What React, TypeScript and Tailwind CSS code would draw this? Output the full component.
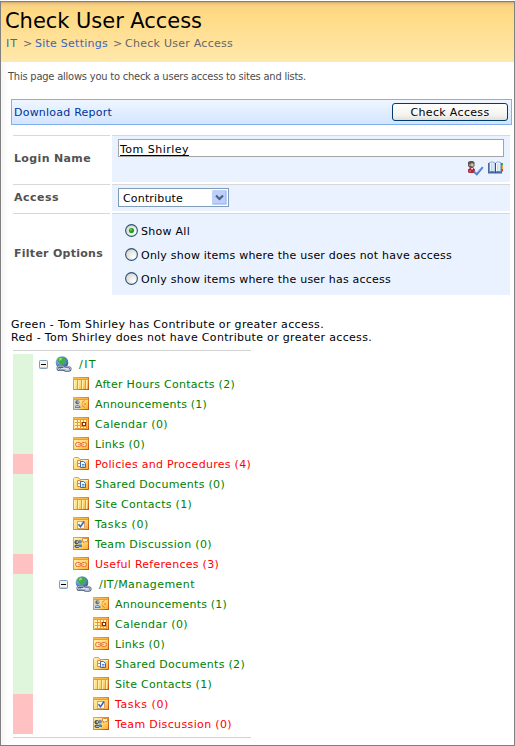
import React from "react";

type IconName = "columns" | "announce" | "calendar" | "links" | "docs" | "tasks" | "discussion";

interface Item {
  icon: IconName | "site";
  label: string;
  width: number;
  denied?: boolean;
  depth: number;
}

const items: Item[] = [
  { icon: "site", label: "/IT", width: 18, depth: 0 },
  { icon: "columns", label: "After Hours Contacts (2)", width: 140, depth: 0 },
  { icon: "announce", label: "Announcements (1)", width: 112, depth: 0 },
  { icon: "calendar", label: "Calendar (0)", width: 73, depth: 0 },
  { icon: "links", label: "Links (0)", width: 50, depth: 0 },
  { icon: "docs", label: "Policies and Procedures (4)", width: 156, denied: true, depth: 0 },
  { icon: "docs", label: "Shared Documents (0)", width: 130, depth: 0 },
  { icon: "columns", label: "Site Contacts (1)", width: 97, depth: 0 },
  { icon: "tasks", label: "Tasks (0)", width: 54, depth: 0 },
  { icon: "discussion", label: "Team Discussion (0)", width: 117, depth: 0 },
  { icon: "links", label: "Useful References (3)", width: 124, denied: true, depth: 0 },
  { icon: "site", label: "/IT/Management", width: 96, depth: 1 },
  { icon: "announce", label: "Announcements (1)", width: 112, depth: 1 },
  { icon: "calendar", label: "Calendar (0)", width: 73, depth: 1 },
  { icon: "links", label: "Links (0)", width: 50, depth: 1 },
  { icon: "docs", label: "Shared Documents (2)", width: 130, depth: 1 },
  { icon: "columns", label: "Site Contacts (1)", width: 97, depth: 1 },
  { icon: "tasks", label: "Tasks (0)", width: 54, denied: true, depth: 1 },
  { icon: "discussion", label: "Team Discussion (0)", width: 117, denied: true, depth: 1 },
];

/* Text whose letter spacing is adjusted once so the line fills a given width. */
function Fit({ w, children, className = "" }: { w: number; children: React.ReactNode; className?: string }) {
  const ref = React.useRef<HTMLSpanElement>(null);
  const [spacing, setSpacing] = React.useState(0);
  React.useLayoutEffect(() => {
    const el = ref.current;
    if (!el) return;
    const natural = el.getBoundingClientRect().width - spacing * (el.textContent || "").length;
    setSpacing((w - natural) / (el.textContent || " ").length);
  }, [w]);
  return (
    <span ref={ref} className={"inline-block whitespace-pre " + className} style={{ letterSpacing: spacing }}>
      {children}
    </span>
  );
}

function Defs() {
  return (
    <svg className="absolute h-0 w-0" aria-hidden="true">
      <defs>
        <linearGradient id="gold" x1="0" y1="0" x2="1" y2="1">
          <stop offset="0" stopColor="#fff0b0" />
          <stop offset="0.5" stopColor="#ffdc7c" />
          <stop offset="1" stopColor="#fba928" />
        </linearGradient>
        <linearGradient id="goldEdge" gradientUnits="userSpaceOnUse" x1="0" y1="0" x2="16" y2="13">
          <stop offset="0" stopColor="#f2ac45" />
          <stop offset="0.5" stopColor="#e5862a" />
          <stop offset="1" stopColor="#bb5212" />
        </linearGradient>
        <radialGradient id="globe" cx="0.35" cy="0.3" r="0.8">
          <stop offset="0" stopColor="#b9d8fa" />
          <stop offset="0.5" stopColor="#5b8fd4" />
          <stop offset="1" stopColor="#254a8e" />
        </radialGradient>
        <radialGradient id="radioFace" cx="0.7" cy="0.7" r="0.8">
          <stop offset="0" stopColor="#ffffff" />
          <stop offset="1" stopColor="#d5d4cd" />
        </radialGradient>
      </defs>
    </svg>
  );
}

function Panel() {
  return (
    <>
      <rect x="0.5" y="0.5" width="15" height="12" fill="url(#gold)" stroke="url(#goldEdge)" />
      <path d="M1 1.5H15" stroke="#fbb845" />
      <path d="M1 2.5H15" stroke="#ee9a30" />
    </>
  );
}

function ListIcon({ name }: { name: IconName }) {
  return (
    <svg width="16" height="13" viewBox="0 0 16 13" className="block shrink-0">
      {name === "columns" && (
        <>
          <Panel />
          <path d="M1.5 3V12M5.5 3V12M9.5 3V12M13.5 3V12" stroke="#fff0b0" />
          <path d="M4.5 3V12M8.5 3V12M12.5 3V12" stroke="#eb9a32" />
        </>
      )}
      {name === "announce" && (
        <>
          <Panel />
          <rect x="1" y="3" width="6" height="9" fill="#d9d5c4" />
          <circle cx="4.4" cy="5.2" r="2" fill="#626a78" />
          <circle cx="5.1" cy="4.9" r="0.9" fill="#c3c9d4" />
          <path d="M2 11V9.5Q2.5 8 4.5 8T7.5 9.5V11Z" fill="#5580cc" />
          <path d="M3 9.5H6" stroke="#b5cef5" />
          <path d="M8.5 7H9.5M11 7H13M9 5.5L11.5 3.5M9 8.5L11.5 10.5" stroke="#dd7a26" fill="none" />
        </>
      )}
      {name === "calendar" && (
        <>
          <Panel />
          <path d="M2 3H14V12H2Z" fill="#ec9a34" />
          <path
            d="M2 3h2v2h-2zM5 3h2v2h-2zM8 3h2v2h-2zM11 3h2v2h-2zM2 6h2v2h-2zM5 6h2v2h-2zM2 9h2v2h-2zM5 9h2v2h-2zM8 10h2v1h-2zM11 10h2v1h-2z"
            fill="#fff4c0"
          />
          <rect x="9.5" y="5.5" width="3" height="3" fill="#fff" stroke="#8c2f08" />
        </>
      )}
      {name === "links" && (
        <>
          <Panel />
          <rect x="2.5" y="5.5" width="5.5" height="4" rx="2" fill="#ffe9b8" stroke="#e8703a" />
          <rect x="8" y="5.5" width="5.5" height="4" rx="2" fill="#ffe0a0" stroke="#e8703a" />
          <path d="M5 7.5H11" stroke="#f09a68" />
        </>
      )}
      {name === "docs" && (
        <>
          <path d="M0.5 12.5V1.5L1.5 0.5H5.5L7 2.5H15.5V12.5Z" fill="url(#gold)" stroke="url(#goldEdge)" />
          <path d="M1 3.5H15" stroke="#fff0b4" />
          <path d="M4.5 3.5H7.5V9.5H4.5Z" fill="#fff9e4" stroke="#df8c34" />
          <path d="M5 6.5H7" stroke="#e98a20" />
          <path d="M7.5 4.5H10.5L12.5 6.5V10.5H7.5Z" fill="#f2f7ff" stroke="#4269af" />
          <path d="M9 7.5H11.5M9 9H11.5" stroke="#5285d2" />
        </>
      )}
      {name === "tasks" && (
        <>
          <Panel />
          <rect x="4.5" y="4.5" width="7" height="7" fill="#fff6e0" stroke="#d9a468" />
          <path d="M5.5 7.2L7.5 9.8L11 4.5" stroke="#3560c4" strokeWidth="1.5" fill="none" />
        </>
      )}
      {name === "discussion" && (
        <>
          <rect x="0.5" y="0.5" width="15" height="12" fill="url(#gold)" stroke="url(#goldEdge)" />
          <path d="M10.5 1.5H14.5V4.5H12L10.5 6V4.5H9.5V1.5Z" fill="#fff5d0" stroke="#e58a34" />
          <circle cx="7" cy="4.7" r="1.9" fill="#7189a4" />
          <path d="M5 10V8Q7 6.5 9 8V10Z" fill="#4a84b4" />
          <circle cx="3.6" cy="5.2" r="2.1" fill="#4b5058" />
          <circle cx="4.2" cy="5" r="0.9" fill="#cdd1d5" />
          <path d="M1.5 10V8.5Q3.5 6.5 6 8.5V11H3Z" fill="#505c68" />
          <path d="M3 9.5H6" stroke="#9bbbd9" />
        </>
      )}
    </svg>
  );
}

function SiteIcon() {
  return (
    <svg width="17" height="16" viewBox="0 0 17 16" className="block shrink-0">
      <circle cx="7" cy="6.5" r="6.3" fill="url(#globe)" />
      <path d="M3.5 1.4L7.5 0.8L10.5 1.8L11.5 3.5L9.8 4.8L9.5 6.5L8 8L7 10L5 8L3.5 6.5L2 4.5Z" fill="#45ab48" />
      <path d="M4.5 2L7 1.8L6.5 4L4 4.8Z" fill="#93db83" />
      <path d="M11.5 5L12.8 5L12.5 7.5L11.2 8.2Z" fill="#3c9a48" />
      <g fill="none">
        <rect x="2.5" y="10.5" width="6.5" height="3.6" rx="1.8" stroke="#4a5a78" strokeWidth="2" />
        <rect x="9" y="11.2" width="6.5" height="3.6" rx="1.8" stroke="#4a5a78" strokeWidth="2" />
        <rect x="2.5" y="10.2" width="6.5" height="3.6" rx="1.8" stroke="#c3cee2" strokeWidth="0.9" />
        <rect x="9" y="10.9" width="6.5" height="3.6" rx="1.8" stroke="#c3cee2" strokeWidth="0.9" />
        <path d="M6 12.6H12" stroke="#e4eaf4" />
      </g>
    </svg>
  );
}

function Collapse() {
  return (
    <svg width="9" height="9" viewBox="0 0 9 9" className="block shrink-0">
      <rect x="0.5" y="0.5" width="8" height="8" rx="0.8" fill="#f4f3ee" stroke="#7c9ebd" />
      <path d="M1 7.5H8" stroke="#d2cdc0" />
      <path d="M2 4.5H7" stroke="#000" />
    </svg>
  );
}

function CheckNames() {
  return (
    <svg width="17" height="15" viewBox="0 0 17 15" className="block">
      <path d="M1 1L3 0H6L7.5 1.5V5L6 7H3L1 5Z" fill="#5c5450" />
      <path d="M3.5 2.5H6.5V5.5H4.5Z" fill="#d0c4bb" />
      <path d="M2 3H4V5H2Z" fill="#938a83" />
      <path d="M1 11V8.5L3 7H6.5L8 8.5V12H2Z" fill="#ae2a38" />
      <path d="M4 7L5 9L6.2 7Z" fill="#fff" />
      <path d="M2.5 9H4V11H2.5Z" fill="#d9636c" />
      <path d="M6.8 10.5L9.8 13.2L15.8 6.2" stroke="#4a7ad6" strokeWidth="2" fill="none" />
      <path d="M7.5 10.5L9.8 12.2L15 6.3" stroke="#86acf0" strokeWidth="0.7" fill="none" />
    </svg>
  );
}

function AddressBook() {
  return (
    <svg width="15" height="13" viewBox="0 0 15 13" className="block">
      <path d="M0 2H14V12.5H0Z" fill="#45689f" />
      <path d="M13.5 2H15V4.5H13.5Z" fill="#35a455" />
      <path d="M13.5 4.5H15V8H13.5Z" fill="#e8ab2c" />
      <path d="M13.5 8H15V10.5H13.5Z" fill="#c94734" />
      <path d="M1.5 1.5Q5 0 7 2V11Q5 9.5 1.5 10.5Z" fill="#eef5ff" stroke="#6b91c8" strokeWidth="0.8" />
      <path d="M7.5 2Q9 0 12.8 1.5V10.5Q9 9.5 7.5 11Z" fill="#fff" stroke="#6b91c8" strokeWidth="0.8" />
      <path d="M3.5 2.5V9.5M5 2.5V9.5M9.5 2.5V9.5M11 2.5V9.5" stroke="#b4cdf0" strokeWidth="0.8" />
      <path d="M7.5 2V12" stroke="#2d4d85" />
    </svg>
  );
}

function Radio({ checked, label, w }: { checked?: boolean; label: string; w: number }) {
  return (
    <div className="flex h-6 items-start">
      <svg width="13" height="13" viewBox="0 0 13 13" className="mt-[5px] block shrink-0">
        <circle cx="6.5" cy="6.5" r="5.9" fill="url(#radioFace)" stroke="#285480" strokeWidth="1.1" />
        {checked && <circle cx="6.5" cy="6.5" r="2.6" fill="#21a121" />}
        {checked && <circle cx="5.8" cy="5.8" r="1.1" fill="#55d551" />}
      </svg>
      <div className="ml-[3px] mt-[6px] leading-[14px]">
        <Fit w={w}>{label}</Fit>
      </div>
    </div>
  );
}

function FormRow({ label, w, height, children }: { label: string; w: number; height: string; children: React.ReactNode }) {
  return (
    <div className={"flex gap-[2px] " + height}>
      <div className="flex w-[97px] items-center border-t border-[#d8d8d8] pb-[2px] pl-[1px] font-bold text-[#525252]">
        <Fit w={w}>{label}</Fit>
      </div>
      <div className="w-[398px] border-t border-[#d8d8d8] bg-[#eaf2ff] pl-[6px] pr-[6px]">{children}</div>
    </div>
  );
}

export default function App() {
  return (
    <div className="h-[746px] w-[515px] bg-white pt-px font-['Verdana','DejaVu_Sans',sans-serif] text-[11px] leading-[13px] text-black">
      <Defs />
      <div className="h-[745px] w-[515px] border border-[#808080] bg-[linear-gradient(to_right,#f6f6f6,#ffffff_8px)]">
        <header className="h-[60px] bg-[linear-gradient(to_bottom,#cfa970_0px,#efcb82_2px,#fbd581_5px,#ffda85_12px,#ffe8ab_60px)] pl-[4px] pt-[6px]">
          <h1 className="h-[26px] text-[21px] leading-[26px]">
            <Fit w={197}>Check User Access</Fit>
          </h1>
          <nav className="mt-[3px] flex pl-[1px] leading-[14px] text-[#666666]">
            <Fit w={12} className="text-[#3966bf]">IT</Fit>
            <span className="w-[17px] pl-[5px]">&gt;</span>
            <Fit w={73} className="text-[#3966bf]">Site Settings</Fit>
            <span className="w-[17px] pl-[5px]">&gt;</span>
            <Fit w={108}>Check User Access</Fit>
          </nav>
        </header>

        <p className="h-[37px] pl-[7px] pt-[8px] font-['Tahoma','DejaVu_Sans_Condensed','DejaVu_Sans',sans-serif] leading-[14px] text-[#4c4c4c]">
          <Fit w={298}>This page allows you to check a users access to sites and lists.</Fit>
        </p>

        <div className="ml-[10px] flex h-[26px] w-[501px] items-center justify-between border border-[#83b0ec] bg-[linear-gradient(to_bottom,#eff6ff,#d3e5ff)] pl-[2px] pr-[3px]">
          <span className="text-[#003399]">
            <Fit w={98}>Download Report</Fit>
          </span>
          <button className="h-[18px] w-[116px] rounded-[3px] border border-[#003c74] bg-[linear-gradient(to_bottom,#ffffff,#f3f3ef_70%,#e2dfd6)] pt-[1px] leading-[14px]">
            <Fit w={79}>Check Access</Fit>
          </button>
        </div>

        <div className="ml-[12px] mt-[10px] flex flex-col gap-[2px]">
          <FormRow label="Login Name" w={77} height="h-[47px]">
            <div className="mt-[3px] flex h-[18px] w-[386px] items-start border border-[#a5a5a5] bg-white pl-[1px] pt-[1px]">
              <Fit w={69} className="h-[15px] border-b border-black pt-[2px] leading-[13px]">Tom Shirley</Fit>
            </div>
            <div className="mt-[4px] flex justify-end gap-[4px] pr-[1px]">
              <CheckNames />
              <AddressBook />
            </div>
          </FormRow>
          <FormRow label="Access" w={45} height="h-[27px]">
            <div className="mt-[3px] flex h-[19px] w-[111px] items-center justify-between border border-[#7f9db9] bg-white pl-[4px] pr-[1px]">
              <div className="pt-[1px]">
                <Fit w={60}>Contribute</Fit>
              </div>
              <svg width="15" height="15" viewBox="0 0 15 15" className="block">
                <rect width="15" height="15" rx="1.5" fill="#bdd0fb" />
                <path d="M1 13.5H14M13.5 1V14" stroke="#a9bff0" />
                <path d="M4 5.5L7.5 9L11 5.5" stroke="#4d6185" strokeWidth="2.2" fill="none" />
              </svg>
            </div>
          </FormRow>
          <FormRow label="Filter Options" w={89} height="h-[82px]">
            <div className="pl-[7px] pt-[5px]">
              <Radio checked label="Show All" w={49} />
              <Radio label="Only show items where the user does not have access" w={311} />
              <Radio label="Only show items where the user has access" w={250} />
            </div>
          </FormRow>
        </div>

        <div className="ml-[10px] mt-[23px] h-[32px]">
          <div>
            <Fit w={313}>Green - Tom Shirley has Contribute or greater access.</Fit>
          </div>
          <div>
            <Fit w={361}>Red - Tom Shirley does not have Contribute or greater access.</Fit>
          </div>
        </div>

        <div className="ml-[12px] w-[238px] border-y border-[#d2d2d2] pb-[3px] pt-[3px]">
          {items.map((it, i) => (
            <div key={i} className="flex h-5">
              <div className={it.denied ? "w-5 shrink-0 bg-[#ffc1c1]" : "w-5 shrink-0 bg-[#dff5dc]"} />
              <div className={"flex items-center " + (it.depth === 1 ? "pl-5" : "pl-0")}>
                {it.icon === "site" ? (
                  <div className="flex items-center pl-[6px]">
                    <Collapse />
                    <div className="ml-[7px]">
                      <SiteIcon />
                    </div>
                    <div className="w-[7px]" />
                  </div>
                ) : (
                  <div className="pb-px pl-[40px] pr-[6px]">
                    <ListIcon name={it.icon} />
                  </div>
                )}
                <div className={it.denied ? "text-[#ff0000]" : "text-[#008000]"}>
                  <Fit w={it.width}>{it.label}</Fit>
                </div>
              </div>
            </div>
          ))}
        </div>
      </div>
    </div>
  );
}
